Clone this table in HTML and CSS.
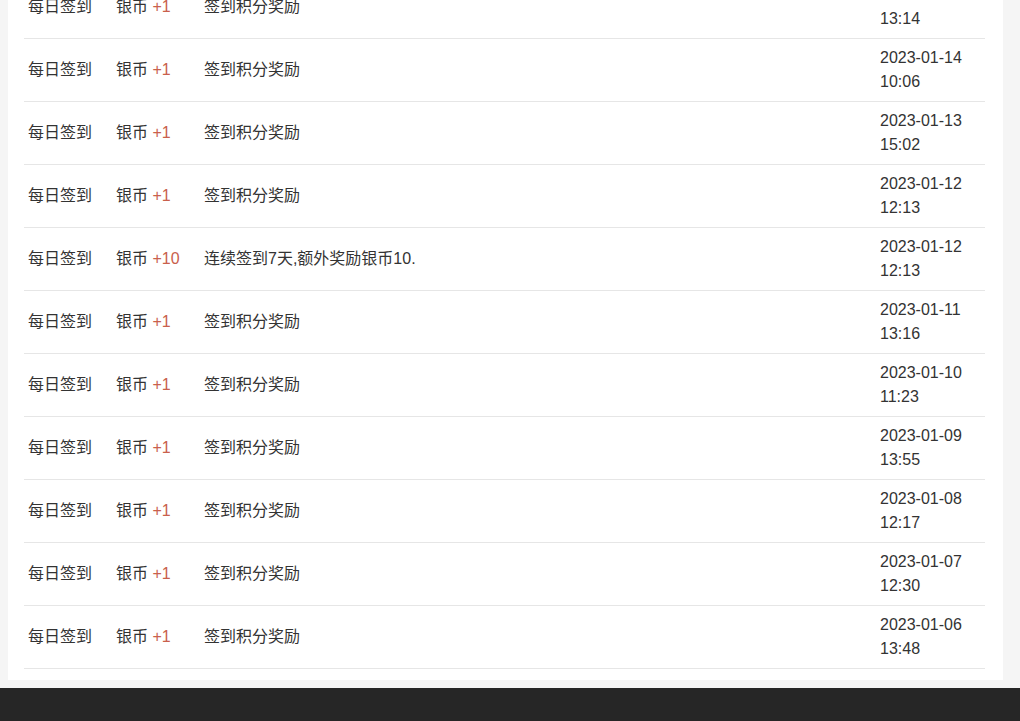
FILE: index.html
```html
<!DOCTYPE html>
<html lang="zh-CN">
<head>
    <meta charset="UTF-8">
    <title>积分记录</title>
    <link rel="stylesheet" href="styles.css">
</head>
<body>
    <div class="card">
        <table class="log">
            <tbody id="logBody">
            </tbody>
        </table>
    </div>
    <div class="footer"></div>

    <script>
        // Credit log rows
        const rows = [
            ['+1', '签到积分奖励', '2023-01-15', '13:14'],
            ['+1', '签到积分奖励', '2023-01-14', '10:06'],
            ['+1', '签到积分奖励', '2023-01-13', '15:02'],
            ['+1', '签到积分奖励', '2023-01-12', '12:13'],
            ['+10', '连续签到7天,额外奖励银币10.', '2023-01-12', '12:13'],
            ['+1', '签到积分奖励', '2023-01-11', '13:16'],
            ['+1', '签到积分奖励', '2023-01-10', '11:23'],
            ['+1', '签到积分奖励', '2023-01-09', '13:55'],
            ['+1', '签到积分奖励', '2023-01-08', '12:17'],
            ['+1', '签到积分奖励', '2023-01-07', '12:30'],
            ['+1', '签到积分奖励', '2023-01-06', '13:48']
        ];

        document.getElementById('logBody').innerHTML = rows.map(r => `
            <tr>
                <td class="type">每日签到</td>
                <td class="amount">银币 <span class="plus">${r[0]}</span></td>
                <td class="note">${r[1]}</td>
                <td class="time">${r[2]}<br>${r[3]}</td>
            </tr>
        `).join('');
    </script>
</body>
</html>
```

FILE: styles.css
```css
body {
    margin: 0;
    background-color: #f5f5f5;
    font-family: "Liberation Sans", "Noto Sans CJK SC", sans-serif;
    font-size: 16px;
    color: #333;
}

.card {
    background-color: #fff;
    margin: -24px 0 0 8px;
    width: 995px;
    box-sizing: border-box;
    padding: 0 18px 11px 16px;
}

.log {
    width: 100%;
    border-collapse: collapse;
    table-layout: fixed;
}

.log td {
    padding: 7px 4px;
    line-height: 24px;
    vertical-align: middle;
    border-bottom: 1px solid #e6e6e6;
    white-space: nowrap;
}

.log .type {
    width: 80px;
}

.log .amount {
    width: 80px;
}

.log .time {
    width: 101px;
}

.plus {
    color: #c9604c;
}

.footer {
    margin-top: 8px;
    height: 40px;
    background-color: #262626;
}
```
